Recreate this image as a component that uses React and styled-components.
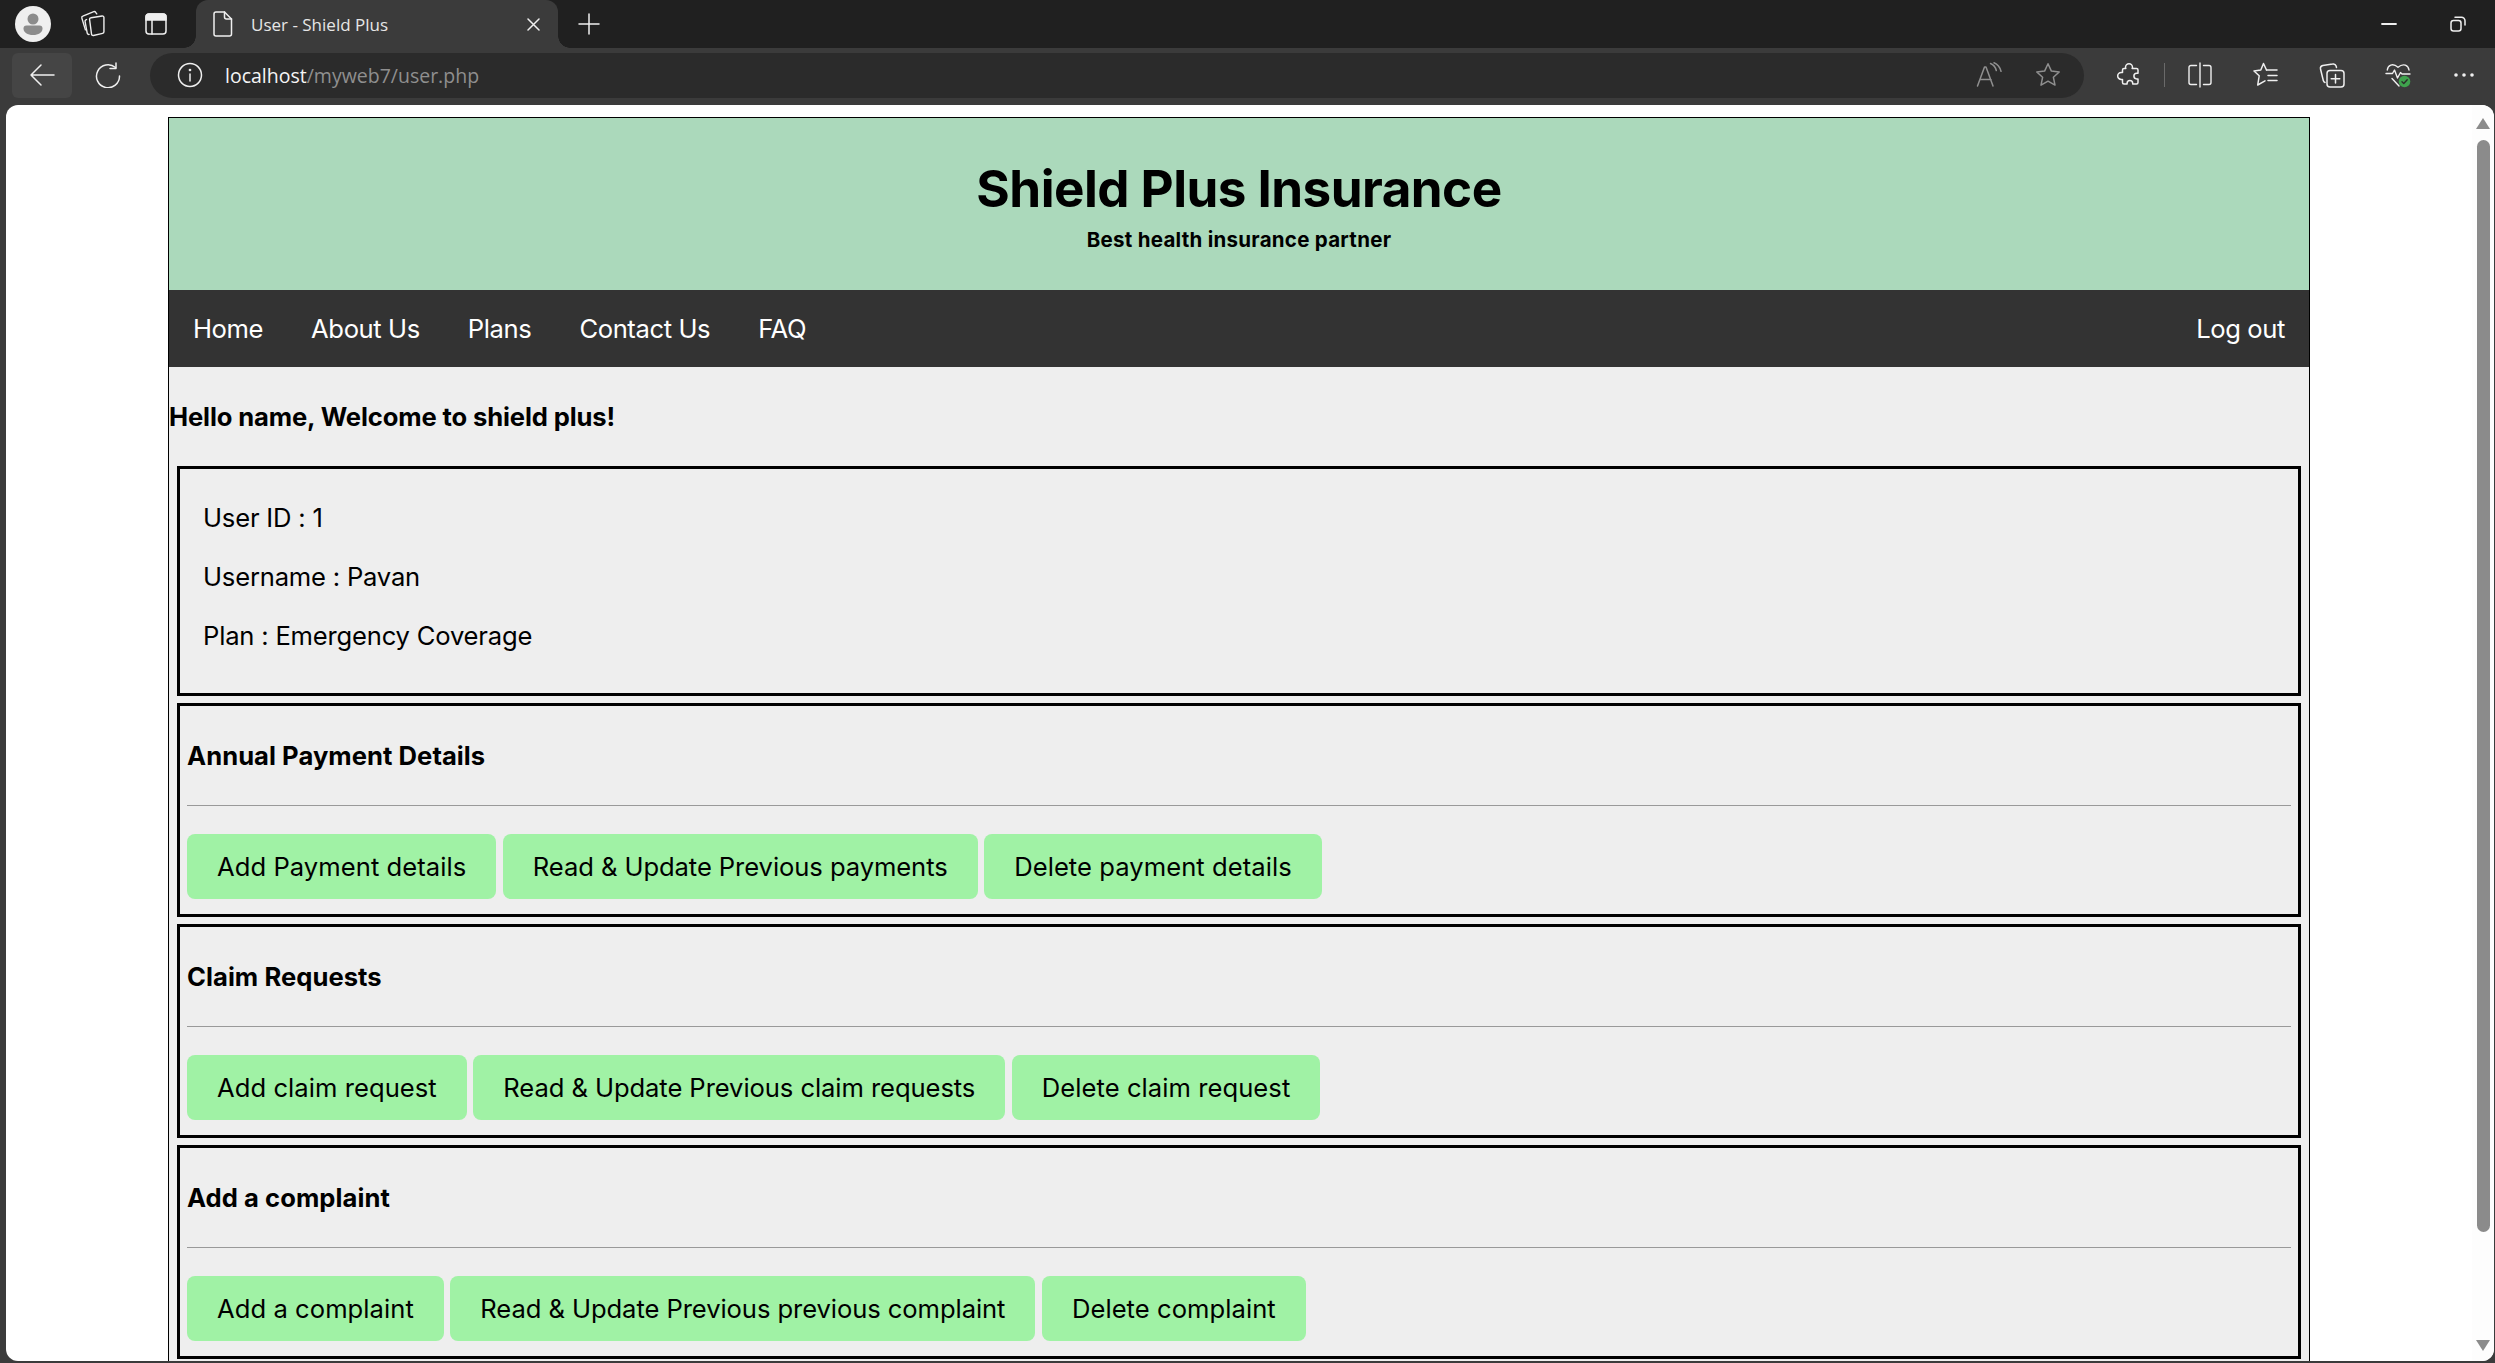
import React from 'react';
import styled, { createGlobalStyle } from 'styled-components';

const Global = createGlobalStyle`
  html, body { margin: 0; padding: 0; height: 100%; overflow: hidden; background: #3b3b3b; }
  * { box-sizing: border-box; }
`;

const Window = styled.div`
  width: 2495px;
  height: 1363px;
  display: flex;
  flex-direction: column;
  overflow: hidden;
  background: #3b3b3b;
  font-family: "Open Sans", "Noto Sans", sans-serif;
`;

/* browser chrome */
const TabStrip = styled.div`
  height: 48px;
  flex: none;
  display: flex;
  align-items: center;
  background: #202020;
  color: #f2f2f2;
`;

const StripButton = styled.div`
  width: ${p => p.$w || 60}px;
  height: 48px;
  flex: none;
  display: flex;
  align-items: center;
  justify-content: center;
`;

const Tab = styled.div`
  position: relative;
  width: 362px;
  height: 48px;
  flex: none;
  display: flex;
  align-items: center;
  background: #3b3b3b;
  border-radius: 12px 12px 0 0;
  padding-left: 17px;
  font-size: 17px;
  color: #e6e6e6;
  &::before, &::after {
    content: '';
    position: absolute;
    bottom: 0;
    width: 12px;
    height: 12px;
  }
  &::before {
    left: -12px;
    background: radial-gradient(circle at 0 0, #202020 11.5px, #3b3b3b 12px);
  }
  &::after {
    right: -12px;
    background: radial-gradient(circle at 100% 0, #202020 11.5px, #3b3b3b 12px);
  }
`;

const TabTitle = styled.span`
  margin-left: 18px;
  flex: 1;
`;

const TabClose = styled.div`
  width: 50px;
  display: flex;
  justify-content: center;
`;

const WindowControls = styled.div`
  margin-left: auto;
  display: flex;
  align-items: center;
  padding-right: 3px;
`;

const Toolbar = styled.div`
  height: 57px;
  flex: none;
  display: flex;
  align-items: center;
  padding: 0 0 3px 12px;
  background: #3b3b3b;
  overflow: hidden;
`;

const ToolButton = styled.div`
  width: ${p => p.$w || 66}px;
  height: 45px;
  flex: none;
  margin-right: ${p => p.$gap || 0}px;
  display: flex;
  align-items: center;
  justify-content: center;
  border-radius: 6px;
  background: ${p => (p.$active ? '#454545' : 'transparent')};
`;

const AddressBar = styled.div`
  width: 1934px;
  height: 45px;
  flex: none;
  margin-right: 12px;
  display: flex;
  align-items: center;
  padding: 0 7px 0 27px;
  background: #2b2b2b;
  border-radius: 23px;
  font-size: 19.5px;
`;

const Url = styled.div`
  margin-left: 22px;
  flex: 1;
  color: #8f8f8f;
  b { font-weight: 400; color: #f5f5f5; }
`;

const Divider = styled.div`
  width: 1px;
  height: 24px;
  flex: none;
  margin: 0 2px;
  background: #6a6a6a;
`;

/* page area */
const Viewport = styled.div`
  flex: none;
  height: 1256px;
  margin: 0 1px 0 6px;
  display: flex;
  background: #fff;
  border-radius: 12px;
  overflow: hidden;
`;

const PageScroll = styled.div`
  flex: 1;
  overflow: hidden;
  padding-top: 12px;
`;

const ScrollTrack = styled.div`
  position: relative;
  width: 22px;
  flex: none;
  background: #fdfdfd;
`;

const ScrollArrow = styled.div`
  position: absolute;
  left: 4px;
  top: ${p => p.$top}px;
  width: 0;
  height: 0;
  border-left: 7.5px solid transparent;
  border-right: 7.5px solid transparent;
  ${p => (p.$down ? 'border-top: 11px solid #8b8b8b;' : 'border-bottom: 11px solid #8b8b8b;')}
`;

const ScrollThumb = styled.div`
  position: absolute;
  left: 5px;
  top: 35px;
  width: 13px;
  height: 1092px;
  border-radius: 7px;
  background: #8b8b8b;
`;

/* the site */
const Site = styled.div`
  width: 2142px;
  height: 1300px;
  margin: 0 auto;
  border: 1px solid #000;
  border-bottom: 0;
  background: #eee;
  font-family: Inter, "Liberation Sans", sans-serif;
  font-size: 25.6px;
  color: #000;
`;

const Banner = styled.header`
  height: 172px;
  background: #abd9bb;
  text-align: center;
  padding-top: 40px;
`;

const Title = styled.h1`
  margin: 0;
  font-size: 51.2px;
  line-height: 60px;
  font-weight: 700;
  letter-spacing: -0.55px;
`;

const Tagline = styled.p`
  margin: 10px 0 0;
  font-size: 20.5px;
  line-height: 24px;
  font-weight: 700;
  letter-spacing: 0.27px;
`;

const Nav = styled.nav`
  height: 77px;
  display: flex;
  align-items: center;
  padding: 0 24px;
  gap: 48px;
  background: #333;
`;

const NavLink = styled.a`
  color: #fff;
  letter-spacing: -0.4px;
  margin-left: ${p => (p.$right ? 'auto' : 0)};
`;

const Greeting = styled.h3`
  margin: 0;
  padding: 31px 0 0;
  height: 99px;
  font-size: 25.6px;
  line-height: 38px;
  font-weight: 700;
  letter-spacing: -0.13px;
`;

const Box = styled.section`
  margin: 0 8px 7px;
  border: 3px solid #000;
  padding: ${p => (p.$info ? '30px 23px 0' : '31px 7px 0')};
  height: ${p => (p.$info ? 230 : 214)}px;
`;

const InfoLine = styled.p`
  margin: 0 0 21px;
  line-height: 38px;
  letter-spacing: -0.2px;
`;

const BoxTitle = styled.h4`
  margin: 0 0 30px;
  font-size: 25.6px;
  line-height: 38px;
  font-weight: 700;
  letter-spacing: 0.05px;
`;

const Rule = styled.hr`
  margin: 0 0 28px;
  border: 0;
  height: 1px;
  background: #999;
`;

const Actions = styled.div`
  display: flex;
  gap: 6.5px;
`;

const ActionButton = styled.a`
  height: 65px;
  padding: 0 30px;
  display: flex;
  align-items: center;
  background: #a0f2a5;
  border-radius: 8px;
  letter-spacing: ${p => (p.$long ? '-0.08px' : '0.05px')};
  color: #000;
`;

/* icons */
const Svg = ({ size = 24, w, h, children, view = '0 0 24 24', stroke = '#efefef', sw = 1.5 }) => (
  <svg width={w || size} height={h || size} viewBox={view} fill="none" stroke={stroke} strokeWidth={sw} strokeLinecap="round" strokeLinejoin="round">
    {children}
  </svg>
);

const Avatar = () => (
  <svg width="36" height="36" viewBox="0 0 36 36">
    <circle cx="18" cy="18" r="18" fill="#efefef" />
    <circle cx="18" cy="13" r="5.5" fill="#8c8c8c" />
    <path d="M8.5 22.5a3 3 0 0 1 3-3h13a3 3 0 0 1 3 3c0 4-4 6.5-9.5 6.5s-9.5-2.5-9.5-6.5z" fill="#8c8c8c" />
  </svg>
);

const CollectionsTabs = () => (
  <Svg size={30} view="0 0 28 28" sw={1.3}>
    <path d="M12.2 8.2l10.300-1.700a1.500 1.500 0 0 1 1.700 1.300v13.400a1.500 1.500 0 0 1-1.200 1.500l-8.600 2a1.500 1.500 0 0 1-1.800-1.400l-1.800-13.500a1.500 1.500 0 0 1 1.400-1.600z" />
    <path d="M8 9.800l-.6.300a1.500 1.500 0 0 0-.8 1.600l2 10.800a1.500 1.500 0 0 0 1.800 1.200" />
    <path d="M17.500 4.500l-1-1.400a1.500 1.500 0 0 0-1.800-.6L4.500 6.600a1.500 1.500 0 0 0-.9 1.900l3.300 11" />
  </Svg>
);

const TabActions = () => (
  <Svg size={22} view="0 0 22 22" sw={1.5}>
    <rect x="1" y="1" width="20" height="20" rx="3" />
    <path d="M1 4a3 3 0 0 1 3-3h14a3 3 0 0 1 3 3v3H1z" fill="#efefef" />
    <path d="M7 7v14" />
  </Svg>
);

const DocIcon = () => (
  <Svg w={20} h={26} view="0 0 20 26" sw={1.5}>
    <path d="M3 1h8.500L18.500 8v15a2 2 0 0 1-2 2H3a2 2 0 0 1-2-2V3a2 2 0 0 1 2-2z" />
    <path d="M11.500 1v5a2 2 0 0 0 2 2h5" />
  </Svg>
);

const CloseIcon = () => (
  <Svg size={13} view="0 0 13 13" sw={1.5}>
    <path d="M1 1l11 11M12 1L1 12" />
  </Svg>
);

const PlusIcon = () => (
  <Svg size={22} view="0 0 22 22" sw={1.5}>
    <path d="M11 1v20M1 11h20" />
  </Svg>
);

const Minimize = () => (
  <Svg w={16} h={4} view="0 0 16 4" sw={1.8}>
    <path d="M1 2h14" />
  </Svg>
);

const Restore = () => (
  <Svg size={16} view="0 0 16 16" sw={1.5}>
    <rect x="1" y="4.500" width="10" height="10.500" rx="2.500" />
    <path d="M5 1.200h6.500a3.500 3.500 0 0 1 3.500 3.500V9" />
  </Svg>
);

const BackIcon = () => (
  <Svg size={26} view="0 0 26 26" sw={1.5}>
    <path d="M25 13H2M12 3L2 13l10 10" />
  </Svg>
);

const ReloadIcon = () => (
  <Svg size={26} view="0 0 26 26" sw={1.5}>
    <path d="M20.500 5.500A11.500 11.500 0 1 0 24.500 14" />
    <path d="M21 1v5.500h-6" />
  </Svg>
);

const InfoIcon = () => (
  <Svg size={26} view="0 0 26 26" sw={1.5}>
    <circle cx="13" cy="13" r="11.500" />
    <path d="M13 12v7" />
    <circle cx="13" cy="8" r=".6" fill="#efefef" />
  </Svg>
);

const ReadAloud = () => (
  <Svg size={26} view="0 0 26 26" stroke="#8f8f8f" sw={1.5}>
    <path d="M1.500 24L8.500 5h1.500l7 19M4 17.500h11" />
    <path d="M14.500 1.500c3 1.200 5 3.800 5.800 7M18 .8c3.200 1.300 6 4.500 7 8.500" />
  </Svg>
);

const StarIcon = () => (
  <Svg size={26} view="0 0 26 26" stroke="#8f8f8f" sw={1.5}>
    <path d="M13 1.800l3.400 7.300 7.800.9-5.800 5.300 1.600 7.800L13 19.200l-7 3.900 1.600-7.800L1.800 10l7.800-.9z" />
  </Svg>
);

const PuzzleIcon = () => (
  <Svg size={26} view="0 0 26 26" sw={1.5}>
    <path d="M9.500 5.200a3.500 3.500 0 0 1 7 0c0 .6-.2 1-.4 1.300h4.400a1.500 1.500 0 0 1 1.500 1.500v3.300h-1.300a2.800 2.800 0 0 0 0 5.600H22v3.600a1.500 1.500 0 0 1-1.500 1.500h-3.800v-.8a2.800 2.800 0 0 0-5.600 0v.8H8a1.500 1.500 0 0 1-1.500-1.500v-3.100H5.200a3.500 3.500 0 0 1 0-7h1.300V8A1.500 1.500 0 0 1 8 6.500h1.800c-.2-.3-.3-.7-.3-1.300z" />
  </Svg>
);

const SplitIcon = () => (
  <Svg size={26} view="0 0 26 26" sw={1.4}>
    <path d="M9.500 3.500H4a2 2 0 0 0-2 2v15a2 2 0 0 0 2 2h5.500M16.500 3.500H22a2 2 0 0 1 2 2v15a2 2 0 0 1-2 2h-5.500M13 1v24" />
  </Svg>
);

const FavoritesIcon = () => (
  <Svg size={26} view="0 0 26 26" sw={1.5}>
    <path d="M13.500 8L10.500 1.500 7.800 8 1 9l5.200 4.800L4.700 23l7.300-4.200" />
    <path d="M13.500 8H24M15 13.500h9M15 18.500h9" />
  </Svg>
);

const CollectionsAdd = () => (
  <Svg size={26} view="0 0 26 26" sw={1.5}>
    <rect x="8" y="8.500" width="17" height="16.500" rx="3" />
    <path d="M16.500 12.500v8.500M12.200 16.700h8.600" />
    <path d="M17.500 5.500l-.4-1.500a3 3 0 0 0-3.500-2L3.800 3.500A3 3 0 0 0 1.500 7l2.800 11.500a3 3 0 0 0 1.700 2" />
  </Svg>
);

const HealthIcon = () => (
  <svg width="26" height="26" viewBox="0 0 26 26" fill="none" stroke="#efefef" strokeWidth="1.4" strokeLinecap="round" strokeLinejoin="round">
    <path d="M2.300 8C2.800 3.500 7.500.5 13 5.300 18.500.5 23.300 3.500 24 8" />
    <path d="M1 11.500h6.500L9.500 8l3 8 3-5.500 1.500 1.500h8" />
    <path d="M7 16.500l7 7.500" />
    <circle cx="19.500" cy="19.500" r="5.800" fill="#3fa34d" stroke="none" />
    <path d="M17 19.800l1.800 1.700 3.400-3.700" stroke="#2c2c2c" />
  </svg>
);

const DotsIcon = () => (
  <svg width="20" height="4" viewBox="0 0 20 4" fill="#efefef">
    <circle cx="2" cy="2" r="1.800" />
    <circle cx="10" cy="2" r="1.800" />
    <circle cx="18" cy="2" r="1.800" />
  </svg>
);

const sections = [
  { title: 'Annual Payment Details', actions: ['Add Payment details', 'Read & Update Previous payments', 'Delete payment details'] },
  { title: 'Claim Requests', actions: ['Add claim request', 'Read & Update Previous claim requests', 'Delete claim request'] },
  { title: 'Add a complaint', actions: ['Add a complaint', 'Read & Update Previous previous complaint', 'Delete complaint'] },
];

const navItems = ['Home', 'About Us', 'Plans', 'Contact Us', 'FAQ'];

export default function App() {
  return (
    <Window>
      <Global />
      <TabStrip>
        <StripButton $w={66}><Avatar /></StripButton>
        <StripButton $w={54}><CollectionsTabs /></StripButton>
        <StripButton $w={72}><TabActions /></StripButton>
        <StripButton $w={4} />
        <Tab>
          <DocIcon />
          <TabTitle>User - Shield Plus</TabTitle>
          <TabClose><CloseIcon /></TabClose>
        </Tab>
        <StripButton $w={62}><PlusIcon /></StripButton>
        <WindowControls>
          <StripButton $w={69}><Minimize /></StripButton>
          <StripButton $w={69}><Restore /></StripButton>
        </WindowControls>
      </TabStrip>

      <Toolbar>
        <ToolButton $w={60} $active $gap={6}><BackIcon /></ToolButton>
        <ToolButton $w={60} $gap={12}><ReloadIcon /></ToolButton>
        <AddressBar>
          <InfoIcon />
          <Url><b>localhost</b>/myweb7/user.php</Url>
          <ToolButton $w={59}><ReadAloud /></ToolButton>
          <ToolButton $w={59}><StarIcon /></ToolButton>
        </AddressBar>
        <ToolButton><PuzzleIcon /></ToolButton>
        <Divider />
        <ToolButton><SplitIcon /></ToolButton>
        <ToolButton><FavoritesIcon /></ToolButton>
        <ToolButton><CollectionsAdd /></ToolButton>
        <ToolButton><HealthIcon /></ToolButton>
        <ToolButton><DotsIcon /></ToolButton>
      </Toolbar>

      <Viewport>
        <PageScroll>
          <Site>
            <Banner>
              <Title>Shield Plus Insurance</Title>
              <Tagline>Best health insurance partner</Tagline>
            </Banner>
            <Nav>
              {navItems.map(item => <NavLink key={item}>{item}</NavLink>)}
              <NavLink $right>Log out</NavLink>
            </Nav>
            <Greeting>Hello name, Welcome to shield plus!</Greeting>
            <Box $info>
              <InfoLine>User ID : 1</InfoLine>
              <InfoLine>Username : Pavan</InfoLine>
              <InfoLine>Plan : Emergency Coverage</InfoLine>
            </Box>
            {sections.map(section => (
              <Box key={section.title}>
                <BoxTitle>{section.title}</BoxTitle>
                <Rule />
                <Actions>
                  {section.actions.map((action, i) => <ActionButton key={action} $long={i === 1}>{action}</ActionButton>)}
                </Actions>
              </Box>
            ))}
          </Site>
        </PageScroll>
        <ScrollTrack>
          <ScrollArrow $top={13} />
          <ScrollThumb />
          <ScrollArrow $top={1235} $down />
        </ScrollTrack>
      </Viewport>
    </Window>
  );
}
